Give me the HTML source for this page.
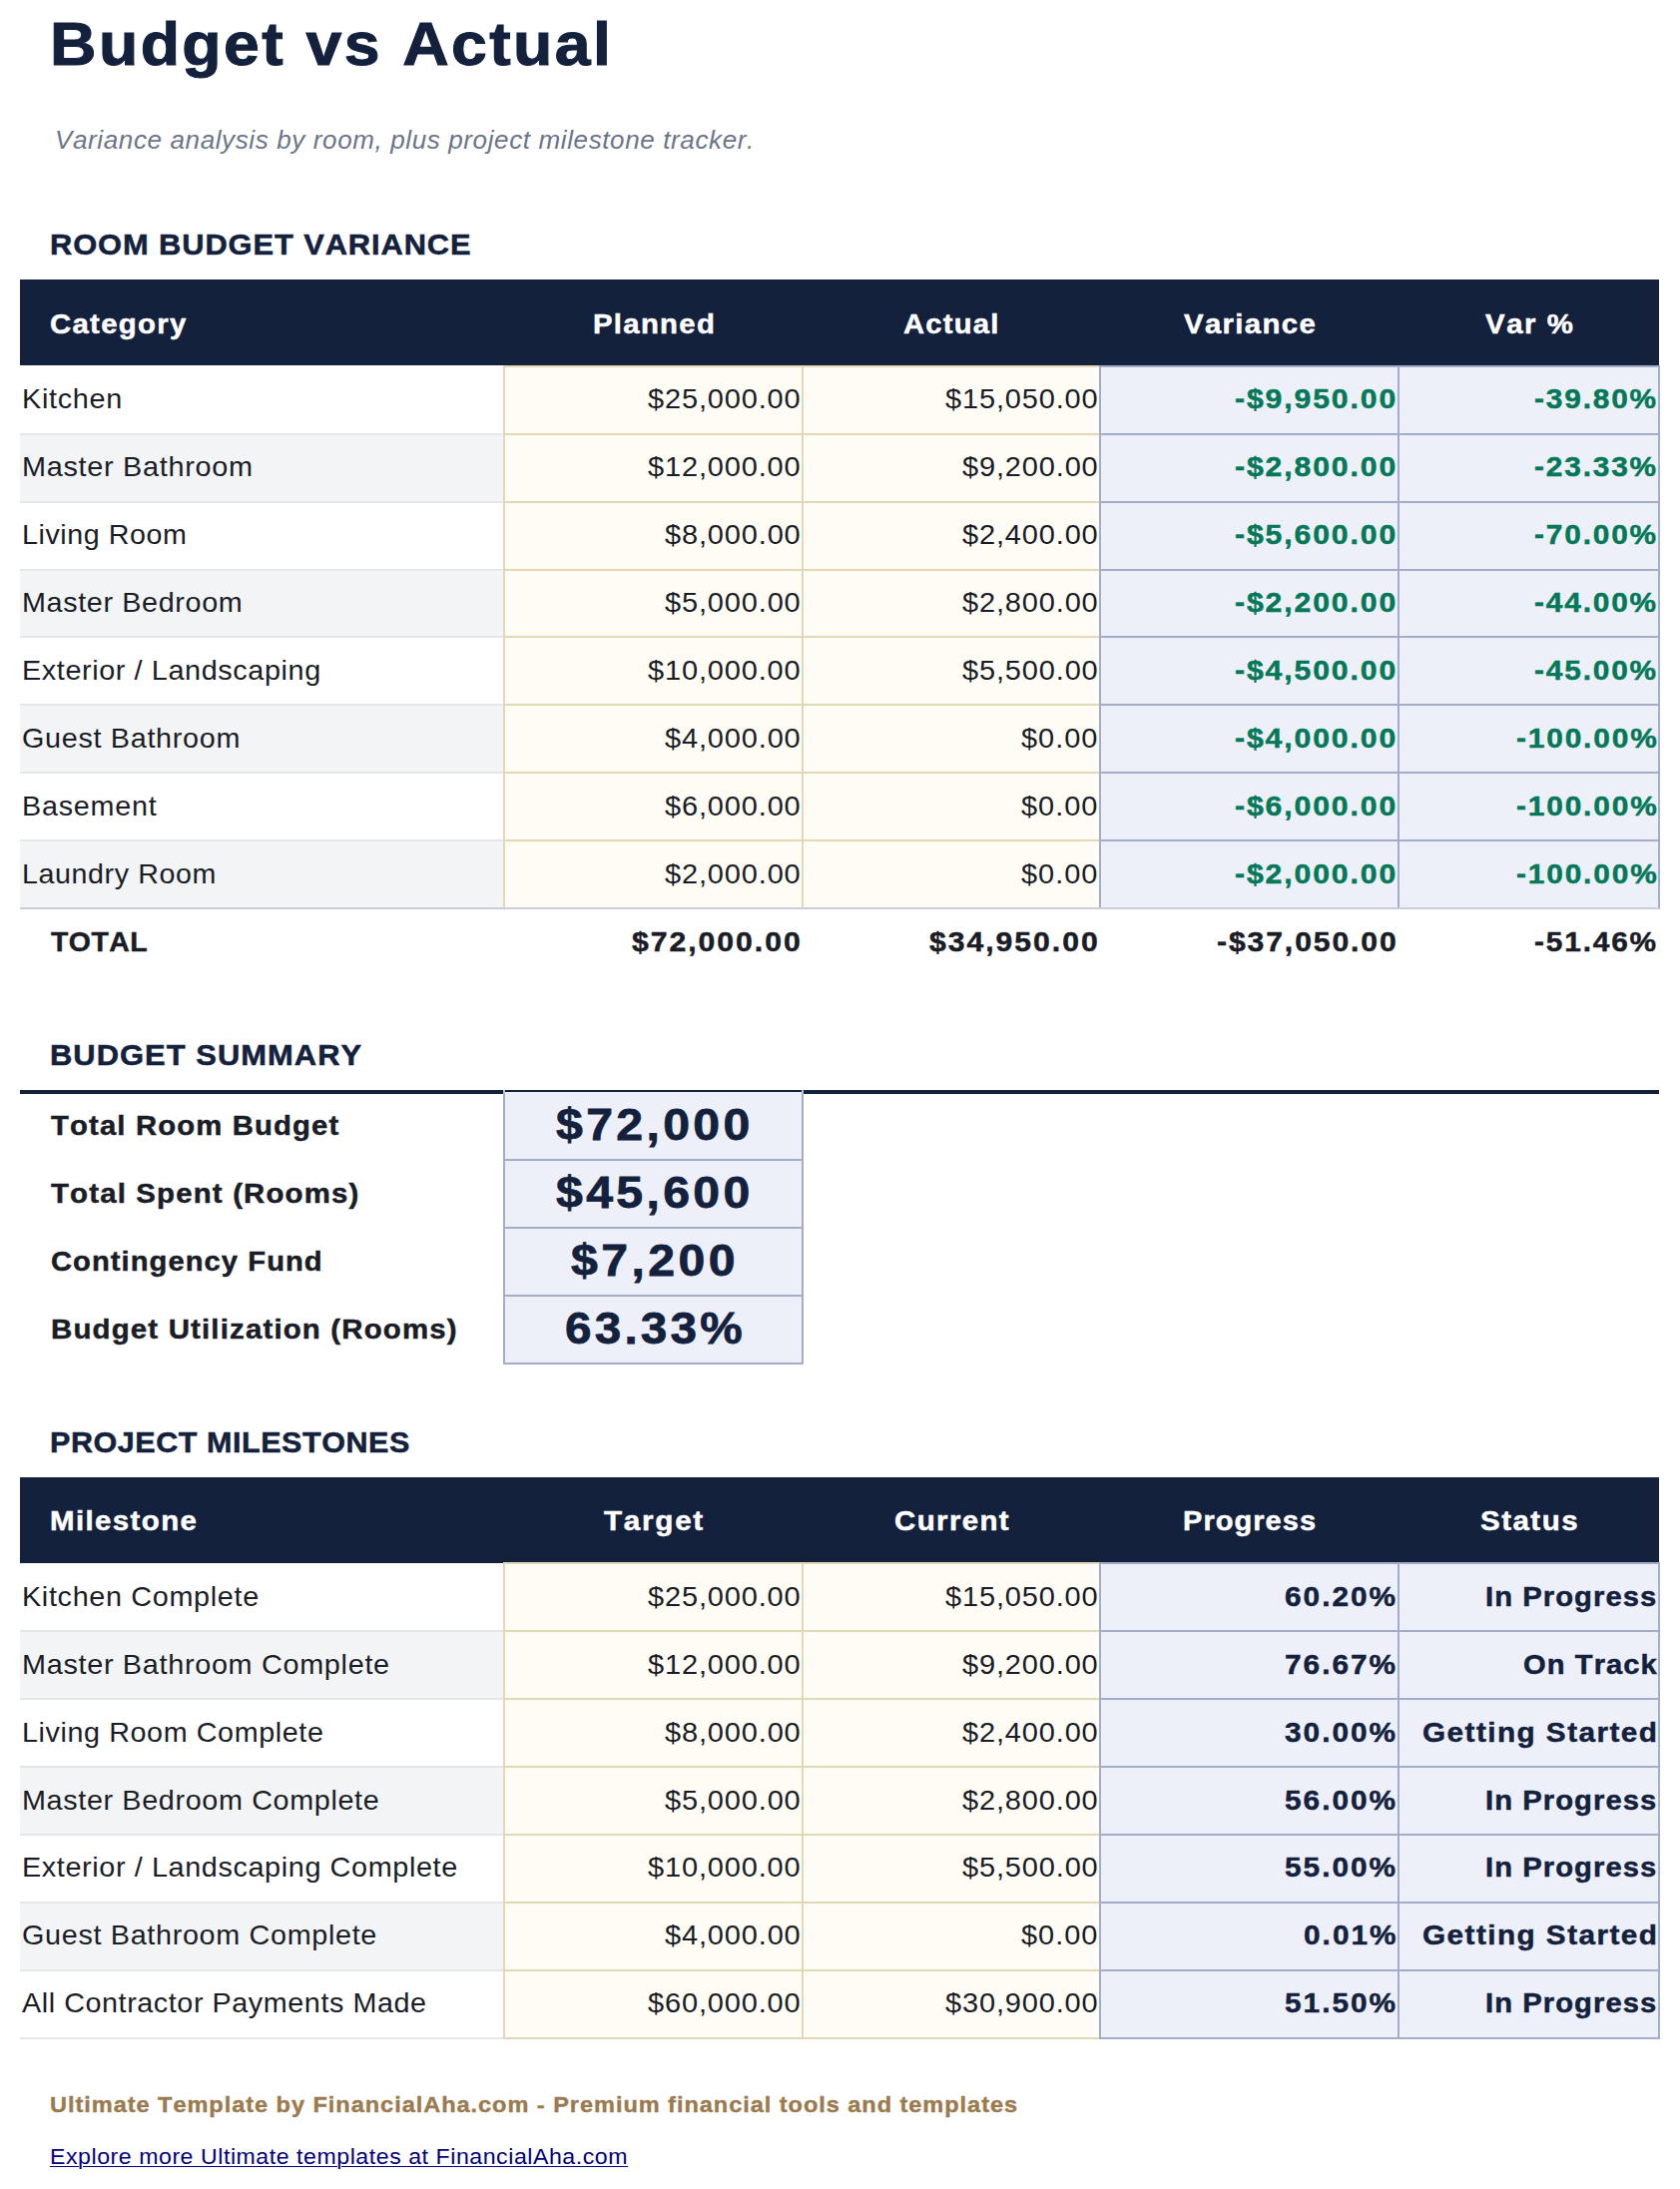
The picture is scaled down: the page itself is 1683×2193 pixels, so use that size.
<!DOCTYPE html><html><head><meta charset="utf-8"><style>html,body{margin:0;padding:0;background:#fff;}body{width:1683px;height:2193px;position:relative;overflow:hidden;}.r{position:absolute;}.t{position:absolute;white-space:pre;line-height:1;font-kerning:none;}</style></head><body><div class="r" style="left:20px;top:280px;width:1642px;height:86px;background:#14213d"></div><div class="r" style="left:20px;top:367px;width:485px;height:68px;background:#ffffff"></div><div class="r" style="left:505px;top:367px;width:597px;height:68px;background:#fefcf4"></div><div class="r" style="left:1102px;top:367px;width:560px;height:68px;background:#edf0f8"></div><div class="r" style="left:20px;top:435px;width:485px;height:68px;background:#f3f4f6"></div><div class="r" style="left:505px;top:435px;width:597px;height:68px;background:#fefcf4"></div><div class="r" style="left:1102px;top:435px;width:560px;height:68px;background:#edf0f8"></div><div class="r" style="left:20px;top:503px;width:485px;height:68px;background:#ffffff"></div><div class="r" style="left:505px;top:503px;width:597px;height:68px;background:#fefcf4"></div><div class="r" style="left:1102px;top:503px;width:560px;height:68px;background:#edf0f8"></div><div class="r" style="left:20px;top:571px;width:485px;height:67px;background:#f3f4f6"></div><div class="r" style="left:505px;top:571px;width:597px;height:67px;background:#fefcf4"></div><div class="r" style="left:1102px;top:571px;width:560px;height:67px;background:#edf0f8"></div><div class="r" style="left:20px;top:638px;width:485px;height:68px;background:#ffffff"></div><div class="r" style="left:505px;top:638px;width:597px;height:68px;background:#fefcf4"></div><div class="r" style="left:1102px;top:638px;width:560px;height:68px;background:#edf0f8"></div><div class="r" style="left:20px;top:706px;width:485px;height:68px;background:#f3f4f6"></div><div class="r" style="left:505px;top:706px;width:597px;height:68px;background:#fefcf4"></div><div class="r" style="left:1102px;top:706px;width:560px;height:68px;background:#edf0f8"></div><div class="r" style="left:20px;top:774px;width:485px;height:68px;background:#ffffff"></div><div class="r" style="left:505px;top:774px;width:597px;height:68px;background:#fefcf4"></div><div class="r" style="left:1102px;top:774px;width:560px;height:68px;background:#edf0f8"></div><div class="r" style="left:20px;top:842px;width:485px;height:68px;background:#f3f4f6"></div><div class="r" style="left:505px;top:842px;width:597px;height:68px;background:#fefcf4"></div><div class="r" style="left:1102px;top:842px;width:560px;height:68px;background:#edf0f8"></div><div class="r" style="left:505px;top:366px;width:597px;height:2px;background:#e2d8b8"></div><div class="r" style="left:1102px;top:366px;width:560px;height:2px;background:#a3adc8"></div><div class="r" style="left:20px;top:434px;width:485px;height:2px;background:#e5e7eb"></div><div class="r" style="left:505px;top:434px;width:597px;height:2px;background:#e2d8b8"></div><div class="r" style="left:1102px;top:434px;width:560px;height:2px;background:#a3adc8"></div><div class="r" style="left:20px;top:502px;width:485px;height:2px;background:#e5e7eb"></div><div class="r" style="left:505px;top:502px;width:597px;height:2px;background:#e2d8b8"></div><div class="r" style="left:1102px;top:502px;width:560px;height:2px;background:#a3adc8"></div><div class="r" style="left:20px;top:570px;width:485px;height:2px;background:#e5e7eb"></div><div class="r" style="left:505px;top:570px;width:597px;height:2px;background:#e2d8b8"></div><div class="r" style="left:1102px;top:570px;width:560px;height:2px;background:#a3adc8"></div><div class="r" style="left:20px;top:637px;width:485px;height:2px;background:#e5e7eb"></div><div class="r" style="left:505px;top:637px;width:597px;height:2px;background:#e2d8b8"></div><div class="r" style="left:1102px;top:637px;width:560px;height:2px;background:#a3adc8"></div><div class="r" style="left:20px;top:705px;width:485px;height:2px;background:#e5e7eb"></div><div class="r" style="left:505px;top:705px;width:597px;height:2px;background:#e2d8b8"></div><div class="r" style="left:1102px;top:705px;width:560px;height:2px;background:#a3adc8"></div><div class="r" style="left:20px;top:773px;width:485px;height:2px;background:#e5e7eb"></div><div class="r" style="left:505px;top:773px;width:597px;height:2px;background:#e2d8b8"></div><div class="r" style="left:1102px;top:773px;width:560px;height:2px;background:#a3adc8"></div><div class="r" style="left:20px;top:841px;width:485px;height:2px;background:#e5e7eb"></div><div class="r" style="left:505px;top:841px;width:597px;height:2px;background:#e2d8b8"></div><div class="r" style="left:1102px;top:841px;width:560px;height:2px;background:#a3adc8"></div><div class="r" style="left:20px;top:909px;width:485px;height:2px;background:#e5e7eb"></div><div class="r" style="left:505px;top:909px;width:597px;height:2px;background:#e2d8b8"></div><div class="r" style="left:1102px;top:909px;width:560px;height:2px;background:#a3adc8"></div><div class="r" style="left:504px;top:366px;width:2px;height:545px;background:#e2d8b8"></div><div class="r" style="left:803px;top:366px;width:2px;height:545px;background:#e2d8b8"></div><div class="r" style="left:1101px;top:366px;width:2px;height:545px;background:#a3adc8"></div><div class="r" style="left:1400px;top:366px;width:2px;height:545px;background:#a3adc8"></div><div class="r" style="left:1661px;top:366px;width:2px;height:545px;background:#a3adc8"></div><div class="r" style="left:20px;top:909px;width:1642px;height:2px;background:#c9cedb"></div><div class="r" style="left:20px;top:1092px;width:1642px;height:4px;background:#14213d"></div><div class="r" style="left:505px;top:1094px;width:299px;height:272px;background:#edf0f8"></div><div class="r" style="left:505px;top:1161px;width:299px;height:2px;background:#a3adc8"></div><div class="r" style="left:505px;top:1229px;width:299px;height:2px;background:#a3adc8"></div><div class="r" style="left:505px;top:1297px;width:299px;height:2px;background:#a3adc8"></div><div class="r" style="left:505px;top:1365px;width:299px;height:2px;background:#a3adc8"></div><div class="r" style="left:504px;top:1094px;width:2px;height:273px;background:#a3adc8"></div><div class="r" style="left:803px;top:1094px;width:2px;height:273px;background:#a3adc8"></div><div class="r" style="left:504px;top:1092px;width:2px;height:4px;background:#b9c0da"></div><div class="r" style="left:803px;top:1092px;width:2px;height:4px;background:#b9c0da"></div><div class="r" style="left:20px;top:1480px;width:1642px;height:86px;background:#14213d"></div><div class="r" style="left:20px;top:1566px;width:485px;height:68px;background:#ffffff"></div><div class="r" style="left:505px;top:1566px;width:597px;height:68px;background:#fefcf4"></div><div class="r" style="left:1102px;top:1566px;width:560px;height:68px;background:#edf0f8"></div><div class="r" style="left:20px;top:1634px;width:485px;height:68px;background:#f3f4f6"></div><div class="r" style="left:505px;top:1634px;width:597px;height:68px;background:#fefcf4"></div><div class="r" style="left:1102px;top:1634px;width:560px;height:68px;background:#edf0f8"></div><div class="r" style="left:20px;top:1702px;width:485px;height:68px;background:#ffffff"></div><div class="r" style="left:505px;top:1702px;width:597px;height:68px;background:#fefcf4"></div><div class="r" style="left:1102px;top:1702px;width:560px;height:68px;background:#edf0f8"></div><div class="r" style="left:20px;top:1770px;width:485px;height:68px;background:#f3f4f6"></div><div class="r" style="left:505px;top:1770px;width:597px;height:68px;background:#fefcf4"></div><div class="r" style="left:1102px;top:1770px;width:560px;height:68px;background:#edf0f8"></div><div class="r" style="left:20px;top:1838px;width:485px;height:68px;background:#ffffff"></div><div class="r" style="left:505px;top:1838px;width:597px;height:68px;background:#fefcf4"></div><div class="r" style="left:1102px;top:1838px;width:560px;height:68px;background:#edf0f8"></div><div class="r" style="left:20px;top:1906px;width:485px;height:68px;background:#f3f4f6"></div><div class="r" style="left:505px;top:1906px;width:597px;height:68px;background:#fefcf4"></div><div class="r" style="left:1102px;top:1906px;width:560px;height:68px;background:#edf0f8"></div><div class="r" style="left:20px;top:1974px;width:485px;height:68px;background:#ffffff"></div><div class="r" style="left:505px;top:1974px;width:597px;height:68px;background:#fefcf4"></div><div class="r" style="left:1102px;top:1974px;width:560px;height:68px;background:#edf0f8"></div><div class="r" style="left:505px;top:1565px;width:597px;height:2px;background:#e2d8b8"></div><div class="r" style="left:1102px;top:1565px;width:560px;height:2px;background:#a3adc8"></div><div class="r" style="left:20px;top:1633px;width:485px;height:2px;background:#e5e7eb"></div><div class="r" style="left:505px;top:1633px;width:597px;height:2px;background:#e2d8b8"></div><div class="r" style="left:1102px;top:1633px;width:560px;height:2px;background:#a3adc8"></div><div class="r" style="left:20px;top:1701px;width:485px;height:2px;background:#e5e7eb"></div><div class="r" style="left:505px;top:1701px;width:597px;height:2px;background:#e2d8b8"></div><div class="r" style="left:1102px;top:1701px;width:560px;height:2px;background:#a3adc8"></div><div class="r" style="left:20px;top:1769px;width:485px;height:2px;background:#e5e7eb"></div><div class="r" style="left:505px;top:1769px;width:597px;height:2px;background:#e2d8b8"></div><div class="r" style="left:1102px;top:1769px;width:560px;height:2px;background:#a3adc8"></div><div class="r" style="left:20px;top:1837px;width:485px;height:2px;background:#e5e7eb"></div><div class="r" style="left:505px;top:1837px;width:597px;height:2px;background:#e2d8b8"></div><div class="r" style="left:1102px;top:1837px;width:560px;height:2px;background:#a3adc8"></div><div class="r" style="left:20px;top:1905px;width:485px;height:2px;background:#e5e7eb"></div><div class="r" style="left:505px;top:1905px;width:597px;height:2px;background:#e2d8b8"></div><div class="r" style="left:1102px;top:1905px;width:560px;height:2px;background:#a3adc8"></div><div class="r" style="left:20px;top:1973px;width:485px;height:2px;background:#e5e7eb"></div><div class="r" style="left:505px;top:1973px;width:597px;height:2px;background:#e2d8b8"></div><div class="r" style="left:1102px;top:1973px;width:560px;height:2px;background:#a3adc8"></div><div class="r" style="left:20px;top:2041px;width:485px;height:2px;background:#e5e7eb"></div><div class="r" style="left:505px;top:2041px;width:597px;height:2px;background:#e2d8b8"></div><div class="r" style="left:1102px;top:2041px;width:560px;height:2px;background:#a3adc8"></div><div class="r" style="left:504px;top:1565px;width:2px;height:478px;background:#e2d8b8"></div><div class="r" style="left:803px;top:1565px;width:2px;height:478px;background:#e2d8b8"></div><div class="r" style="left:1101px;top:1565px;width:2px;height:478px;background:#a3adc8"></div><div class="r" style="left:1400px;top:1565px;width:2px;height:478px;background:#a3adc8"></div><div class="r" style="left:1661px;top:1565px;width:2px;height:478px;background:#a3adc8"></div><div class="t" style="left:49.66px;top:13.05px;font-family:'Liberation Sans', sans-serif;font-size:61.600px;font-weight:700;font-style:normal;letter-spacing:2.302px;color:#14213d;-webkit-text-stroke:1.04px #14213d;transform:scaleX(1.0452);transform-origin:0 0;">Budget vs Actual<span style="display:inline-block;width:0;height:0;vertical-align:baseline"></span></div><div class="t" style="left:54.80px;top:127.90px;font-family:'Liberation Sans', sans-serif;font-size:25.200px;font-weight:400;font-style:italic;letter-spacing:0.583px;color:#6b7589;transform:scaleX(1.0341);transform-origin:0 0;">Variance analysis by room, plus project milestone tracker.<span style="display:inline-block;width:0;height:0;vertical-align:baseline"></span></div><div class="t" style="left:50.43px;top:229.80px;font-family:'Liberation Sans', sans-serif;font-size:30.009px;font-weight:700;font-style:normal;letter-spacing:0.880px;color:#14213d;-webkit-text-stroke:0.51px #14213d;transform:scaleX(1.0281);transform-origin:0 0;">ROOM BUDGET VARIANCE<span style="display:inline-block;width:0;height:0;vertical-align:baseline"></span></div><div class="t" style="left:50.45px;top:311.00px;font-family:'Liberation Sans', sans-serif;font-size:28.000px;font-weight:700;font-style:normal;letter-spacing:1.254px;color:#ffffff;-webkit-text-stroke:0.47px #ffffff;transform:scaleX(1.0476);transform-origin:0 0;">Category<span style="display:inline-block;width:0;height:0;vertical-align:baseline"></span></div><div class="t" style="left:593.59px;top:311.00px;font-family:'Liberation Sans', sans-serif;font-size:28.000px;font-weight:700;font-style:normal;letter-spacing:1.262px;color:#ffffff;-webkit-text-stroke:0.47px #ffffff;transform:scaleX(1.0458);transform-origin:0 0;">Planned<span style="display:inline-block;width:0;height:0;vertical-align:baseline"></span></div><div class="t" style="left:905.34px;top:311.00px;font-family:'Liberation Sans', sans-serif;font-size:28.000px;font-weight:700;font-style:normal;letter-spacing:1.144px;color:#ffffff;-webkit-text-stroke:0.47px #ffffff;transform:scaleX(1.0441);transform-origin:0 0;">Actual<span style="display:inline-block;width:0;height:0;vertical-align:baseline"></span></div><div class="t" style="left:1185.60px;top:311.00px;font-family:'Liberation Sans', sans-serif;font-size:28.000px;font-weight:700;font-style:normal;letter-spacing:1.259px;color:#ffffff;-webkit-text-stroke:0.47px #ffffff;transform:scaleX(1.0497);transform-origin:0 0;">Variance<span style="display:inline-block;width:0;height:0;vertical-align:baseline"></span></div><div class="t" style="left:1487.61px;top:311.00px;font-family:'Liberation Sans', sans-serif;font-size:28.000px;font-weight:700;font-style:normal;letter-spacing:1.459px;color:#ffffff;-webkit-text-stroke:0.47px #ffffff;transform:scaleX(1.0494);transform-origin:0 0;">Var %<span style="display:inline-block;width:0;height:0;vertical-align:baseline"></span></div><div class="t" style="left:22.38px;top:385.90px;font-family:'Liberation Sans', sans-serif;font-size:28.000px;font-weight:400;font-style:normal;letter-spacing:0.673px;color:#1a1d26;transform:scaleX(1.0286);transform-origin:0 0;">Kitchen<span style="display:inline-block;width:0;height:0;vertical-align:baseline"></span></div><div class="t" style="left:648.82px;top:385.90px;font-family:'Liberation Sans', sans-serif;font-size:28.000px;font-weight:400;font-style:normal;letter-spacing:0.822px;color:#1a1d26;transform:scaleX(1.0349);transform-origin:0 0;">$25,000.00<span style="display:inline-block;width:0;height:0;vertical-align:baseline"></span></div><div class="t" style="left:946.82px;top:385.90px;font-family:'Liberation Sans', sans-serif;font-size:28.000px;font-weight:400;font-style:normal;letter-spacing:0.822px;color:#1a1d26;transform:scaleX(1.0349);transform-origin:0 0;">$15,050.00<span style="display:inline-block;width:0;height:0;vertical-align:baseline"></span></div><div class="t" style="left:1237.29px;top:385.90px;font-family:'Liberation Sans', sans-serif;font-size:28.000px;font-weight:700;font-style:normal;letter-spacing:1.753px;color:#047857;-webkit-text-stroke:0.47px #047857;transform:scaleX(1.0771);transform-origin:0 0;">-$9,950.00<span style="display:inline-block;width:0;height:0;vertical-align:baseline"></span></div><div class="t" style="left:1537.36px;top:385.90px;font-family:'Liberation Sans', sans-serif;font-size:28.000px;font-weight:700;font-style:normal;letter-spacing:1.728px;color:#047857;-webkit-text-stroke:0.47px #047857;transform:scaleX(1.0652);transform-origin:0 0;">-39.80%<span style="display:inline-block;width:0;height:0;vertical-align:baseline"></span></div><div class="t" style="left:22.38px;top:453.90px;font-family:'Liberation Sans', sans-serif;font-size:28.000px;font-weight:400;font-style:normal;letter-spacing:0.691px;color:#1a1d26;transform:scaleX(1.0298);transform-origin:0 0;">Master Bathroom<span style="display:inline-block;width:0;height:0;vertical-align:baseline"></span></div><div class="t" style="left:648.82px;top:453.90px;font-family:'Liberation Sans', sans-serif;font-size:28.000px;font-weight:400;font-style:normal;letter-spacing:0.822px;color:#1a1d26;transform:scaleX(1.0349);transform-origin:0 0;">$12,000.00<span style="display:inline-block;width:0;height:0;vertical-align:baseline"></span></div><div class="t" style="left:963.78px;top:453.90px;font-family:'Liberation Sans', sans-serif;font-size:28.000px;font-weight:400;font-style:normal;letter-spacing:0.822px;color:#1a1d26;transform:scaleX(1.0349);transform-origin:0 0;">$9,200.00<span style="display:inline-block;width:0;height:0;vertical-align:baseline"></span></div><div class="t" style="left:1237.29px;top:453.90px;font-family:'Liberation Sans', sans-serif;font-size:28.000px;font-weight:700;font-style:normal;letter-spacing:1.753px;color:#047857;-webkit-text-stroke:0.47px #047857;transform:scaleX(1.0771);transform-origin:0 0;">-$2,800.00<span style="display:inline-block;width:0;height:0;vertical-align:baseline"></span></div><div class="t" style="left:1537.36px;top:453.90px;font-family:'Liberation Sans', sans-serif;font-size:28.000px;font-weight:700;font-style:normal;letter-spacing:1.728px;color:#047857;-webkit-text-stroke:0.47px #047857;transform:scaleX(1.0652);transform-origin:0 0;">-23.33%<span style="display:inline-block;width:0;height:0;vertical-align:baseline"></span></div><div class="t" style="left:22.38px;top:521.90px;font-family:'Liberation Sans', sans-serif;font-size:28.000px;font-weight:400;font-style:normal;letter-spacing:0.550px;color:#1a1d26;transform:scaleX(1.0234);transform-origin:0 0;">Living Room<span style="display:inline-block;width:0;height:0;vertical-align:baseline"></span></div><div class="t" style="left:665.78px;top:521.90px;font-family:'Liberation Sans', sans-serif;font-size:28.000px;font-weight:400;font-style:normal;letter-spacing:0.822px;color:#1a1d26;transform:scaleX(1.0349);transform-origin:0 0;">$8,000.00<span style="display:inline-block;width:0;height:0;vertical-align:baseline"></span></div><div class="t" style="left:963.78px;top:521.90px;font-family:'Liberation Sans', sans-serif;font-size:28.000px;font-weight:400;font-style:normal;letter-spacing:0.822px;color:#1a1d26;transform:scaleX(1.0349);transform-origin:0 0;">$2,400.00<span style="display:inline-block;width:0;height:0;vertical-align:baseline"></span></div><div class="t" style="left:1237.29px;top:521.90px;font-family:'Liberation Sans', sans-serif;font-size:28.000px;font-weight:700;font-style:normal;letter-spacing:1.753px;color:#047857;-webkit-text-stroke:0.47px #047857;transform:scaleX(1.0771);transform-origin:0 0;">-$5,600.00<span style="display:inline-block;width:0;height:0;vertical-align:baseline"></span></div><div class="t" style="left:1537.36px;top:521.90px;font-family:'Liberation Sans', sans-serif;font-size:28.000px;font-weight:700;font-style:normal;letter-spacing:1.728px;color:#047857;-webkit-text-stroke:0.47px #047857;transform:scaleX(1.0652);transform-origin:0 0;">-70.00%<span style="display:inline-block;width:0;height:0;vertical-align:baseline"></span></div><div class="t" style="left:22.38px;top:589.90px;font-family:'Liberation Sans', sans-serif;font-size:28.000px;font-weight:400;font-style:normal;letter-spacing:0.628px;color:#1a1d26;transform:scaleX(1.0261);transform-origin:0 0;">Master Bedroom<span style="display:inline-block;width:0;height:0;vertical-align:baseline"></span></div><div class="t" style="left:665.78px;top:589.90px;font-family:'Liberation Sans', sans-serif;font-size:28.000px;font-weight:400;font-style:normal;letter-spacing:0.822px;color:#1a1d26;transform:scaleX(1.0349);transform-origin:0 0;">$5,000.00<span style="display:inline-block;width:0;height:0;vertical-align:baseline"></span></div><div class="t" style="left:963.78px;top:589.90px;font-family:'Liberation Sans', sans-serif;font-size:28.000px;font-weight:400;font-style:normal;letter-spacing:0.822px;color:#1a1d26;transform:scaleX(1.0349);transform-origin:0 0;">$2,800.00<span style="display:inline-block;width:0;height:0;vertical-align:baseline"></span></div><div class="t" style="left:1237.29px;top:589.90px;font-family:'Liberation Sans', sans-serif;font-size:28.000px;font-weight:700;font-style:normal;letter-spacing:1.753px;color:#047857;-webkit-text-stroke:0.47px #047857;transform:scaleX(1.0771);transform-origin:0 0;">-$2,200.00<span style="display:inline-block;width:0;height:0;vertical-align:baseline"></span></div><div class="t" style="left:1537.36px;top:589.90px;font-family:'Liberation Sans', sans-serif;font-size:28.000px;font-weight:700;font-style:normal;letter-spacing:1.728px;color:#047857;-webkit-text-stroke:0.47px #047857;transform:scaleX(1.0652);transform-origin:0 0;">-44.00%<span style="display:inline-block;width:0;height:0;vertical-align:baseline"></span></div><div class="t" style="left:22.38px;top:657.90px;font-family:'Liberation Sans', sans-serif;font-size:28.000px;font-weight:400;font-style:normal;letter-spacing:0.579px;color:#1a1d26;transform:scaleX(1.0289);transform-origin:0 0;">Exterior / Landscaping<span style="display:inline-block;width:0;height:0;vertical-align:baseline"></span></div><div class="t" style="left:648.82px;top:657.90px;font-family:'Liberation Sans', sans-serif;font-size:28.000px;font-weight:400;font-style:normal;letter-spacing:0.822px;color:#1a1d26;transform:scaleX(1.0349);transform-origin:0 0;">$10,000.00<span style="display:inline-block;width:0;height:0;vertical-align:baseline"></span></div><div class="t" style="left:963.78px;top:657.90px;font-family:'Liberation Sans', sans-serif;font-size:28.000px;font-weight:400;font-style:normal;letter-spacing:0.822px;color:#1a1d26;transform:scaleX(1.0349);transform-origin:0 0;">$5,500.00<span style="display:inline-block;width:0;height:0;vertical-align:baseline"></span></div><div class="t" style="left:1237.29px;top:657.90px;font-family:'Liberation Sans', sans-serif;font-size:28.000px;font-weight:700;font-style:normal;letter-spacing:1.753px;color:#047857;-webkit-text-stroke:0.47px #047857;transform:scaleX(1.0771);transform-origin:0 0;">-$4,500.00<span style="display:inline-block;width:0;height:0;vertical-align:baseline"></span></div><div class="t" style="left:1537.36px;top:657.90px;font-family:'Liberation Sans', sans-serif;font-size:28.000px;font-weight:700;font-style:normal;letter-spacing:1.728px;color:#047857;-webkit-text-stroke:0.47px #047857;transform:scaleX(1.0652);transform-origin:0 0;">-45.00%<span style="display:inline-block;width:0;height:0;vertical-align:baseline"></span></div><div class="t" style="left:22.38px;top:725.90px;font-family:'Liberation Sans', sans-serif;font-size:28.000px;font-weight:400;font-style:normal;letter-spacing:0.659px;color:#1a1d26;transform:scaleX(1.0278);transform-origin:0 0;">Guest Bathroom<span style="display:inline-block;width:0;height:0;vertical-align:baseline"></span></div><div class="t" style="left:665.78px;top:725.90px;font-family:'Liberation Sans', sans-serif;font-size:28.000px;font-weight:400;font-style:normal;letter-spacing:0.822px;color:#1a1d26;transform:scaleX(1.0349);transform-origin:0 0;">$4,000.00<span style="display:inline-block;width:0;height:0;vertical-align:baseline"></span></div><div class="t" style="left:1023.16px;top:725.90px;font-family:'Liberation Sans', sans-serif;font-size:28.000px;font-weight:400;font-style:normal;letter-spacing:0.925px;color:#1a1d26;transform:scaleX(1.0349);transform-origin:0 0;">$0.00<span style="display:inline-block;width:0;height:0;vertical-align:baseline"></span></div><div class="t" style="left:1237.29px;top:725.90px;font-family:'Liberation Sans', sans-serif;font-size:28.000px;font-weight:700;font-style:normal;letter-spacing:1.753px;color:#047857;-webkit-text-stroke:0.47px #047857;transform:scaleX(1.0771);transform-origin:0 0;">-$4,000.00<span style="display:inline-block;width:0;height:0;vertical-align:baseline"></span></div><div class="t" style="left:1518.81px;top:725.90px;font-family:'Liberation Sans', sans-serif;font-size:28.000px;font-weight:700;font-style:normal;letter-spacing:1.728px;color:#047857;-webkit-text-stroke:0.47px #047857;transform:scaleX(1.0662);transform-origin:0 0;">-100.00%<span style="display:inline-block;width:0;height:0;vertical-align:baseline"></span></div><div class="t" style="left:22.38px;top:793.90px;font-family:'Liberation Sans', sans-serif;font-size:28.000px;font-weight:400;font-style:normal;letter-spacing:0.728px;color:#1a1d26;transform:scaleX(1.0268);transform-origin:0 0;">Basement<span style="display:inline-block;width:0;height:0;vertical-align:baseline"></span></div><div class="t" style="left:665.78px;top:793.90px;font-family:'Liberation Sans', sans-serif;font-size:28.000px;font-weight:400;font-style:normal;letter-spacing:0.822px;color:#1a1d26;transform:scaleX(1.0349);transform-origin:0 0;">$6,000.00<span style="display:inline-block;width:0;height:0;vertical-align:baseline"></span></div><div class="t" style="left:1023.16px;top:793.90px;font-family:'Liberation Sans', sans-serif;font-size:28.000px;font-weight:400;font-style:normal;letter-spacing:0.925px;color:#1a1d26;transform:scaleX(1.0349);transform-origin:0 0;">$0.00<span style="display:inline-block;width:0;height:0;vertical-align:baseline"></span></div><div class="t" style="left:1237.29px;top:793.90px;font-family:'Liberation Sans', sans-serif;font-size:28.000px;font-weight:700;font-style:normal;letter-spacing:1.753px;color:#047857;-webkit-text-stroke:0.47px #047857;transform:scaleX(1.0771);transform-origin:0 0;">-$6,000.00<span style="display:inline-block;width:0;height:0;vertical-align:baseline"></span></div><div class="t" style="left:1518.81px;top:793.90px;font-family:'Liberation Sans', sans-serif;font-size:28.000px;font-weight:700;font-style:normal;letter-spacing:1.728px;color:#047857;-webkit-text-stroke:0.47px #047857;transform:scaleX(1.0662);transform-origin:0 0;">-100.00%<span style="display:inline-block;width:0;height:0;vertical-align:baseline"></span></div><div class="t" style="left:22.38px;top:861.90px;font-family:'Liberation Sans', sans-serif;font-size:28.000px;font-weight:400;font-style:normal;letter-spacing:0.573px;color:#1a1d26;transform:scaleX(1.0228);transform-origin:0 0;">Laundry Room<span style="display:inline-block;width:0;height:0;vertical-align:baseline"></span></div><div class="t" style="left:665.78px;top:861.90px;font-family:'Liberation Sans', sans-serif;font-size:28.000px;font-weight:400;font-style:normal;letter-spacing:0.822px;color:#1a1d26;transform:scaleX(1.0349);transform-origin:0 0;">$2,000.00<span style="display:inline-block;width:0;height:0;vertical-align:baseline"></span></div><div class="t" style="left:1023.16px;top:861.90px;font-family:'Liberation Sans', sans-serif;font-size:28.000px;font-weight:400;font-style:normal;letter-spacing:0.925px;color:#1a1d26;transform:scaleX(1.0349);transform-origin:0 0;">$0.00<span style="display:inline-block;width:0;height:0;vertical-align:baseline"></span></div><div class="t" style="left:1237.29px;top:861.90px;font-family:'Liberation Sans', sans-serif;font-size:28.000px;font-weight:700;font-style:normal;letter-spacing:1.753px;color:#047857;-webkit-text-stroke:0.47px #047857;transform:scaleX(1.0771);transform-origin:0 0;">-$2,000.00<span style="display:inline-block;width:0;height:0;vertical-align:baseline"></span></div><div class="t" style="left:1518.81px;top:861.90px;font-family:'Liberation Sans', sans-serif;font-size:28.000px;font-weight:700;font-style:normal;letter-spacing:1.728px;color:#047857;-webkit-text-stroke:0.47px #047857;transform:scaleX(1.0662);transform-origin:0 0;">-100.00%<span style="display:inline-block;width:0;height:0;vertical-align:baseline"></span></div><div class="t" style="left:50.55px;top:929.70px;font-family:'Liberation Sans', sans-serif;font-size:28.000px;font-weight:700;font-style:normal;letter-spacing:0.502px;color:#1a1d26;-webkit-text-stroke:0.47px #1a1d26;transform:scaleX(1.0143);transform-origin:0 0;">TOTAL<span style="display:inline-block;width:0;height:0;vertical-align:baseline"></span></div><div class="t" style="left:632.80px;top:929.70px;font-family:'Liberation Sans', sans-serif;font-size:28.000px;font-weight:700;font-style:normal;letter-spacing:1.833px;color:#1a1d26;-webkit-text-stroke:0.47px #1a1d26;transform:scaleX(1.0770);transform-origin:0 0;">$72,000.00<span style="display:inline-block;width:0;height:0;vertical-align:baseline"></span></div><div class="t" style="left:930.80px;top:929.70px;font-family:'Liberation Sans', sans-serif;font-size:28.000px;font-weight:700;font-style:normal;letter-spacing:1.833px;color:#1a1d26;-webkit-text-stroke:0.47px #1a1d26;transform:scaleX(1.0770);transform-origin:0 0;">$34,950.00<span style="display:inline-block;width:0;height:0;vertical-align:baseline"></span></div><div class="t" style="left:1218.73px;top:929.70px;font-family:'Liberation Sans', sans-serif;font-size:28.000px;font-weight:700;font-style:normal;letter-spacing:1.751px;color:#1a1d26;-webkit-text-stroke:0.47px #1a1d26;transform:scaleX(1.0766);transform-origin:0 0;">-$37,050.00<span style="display:inline-block;width:0;height:0;vertical-align:baseline"></span></div><div class="t" style="left:1537.36px;top:929.70px;font-family:'Liberation Sans', sans-serif;font-size:28.000px;font-weight:700;font-style:normal;letter-spacing:1.728px;color:#1a1d26;-webkit-text-stroke:0.47px #1a1d26;transform:scaleX(1.0652);transform-origin:0 0;">-51.46%<span style="display:inline-block;width:0;height:0;vertical-align:baseline"></span></div><div class="t" style="left:50.43px;top:1041.80px;font-family:'Liberation Sans', sans-serif;font-size:30.009px;font-weight:700;font-style:normal;letter-spacing:1.007px;color:#14213d;-webkit-text-stroke:0.51px #14213d;transform:scaleX(1.0299);transform-origin:0 0;">BUDGET SUMMARY<span style="display:inline-block;width:0;height:0;vertical-align:baseline"></span></div><div class="t" style="left:50.50px;top:1113.90px;font-family:'Liberation Sans', sans-serif;font-size:28.000px;font-weight:700;font-style:normal;letter-spacing:1.102px;color:#1a1d26;-webkit-text-stroke:0.47px #1a1d26;transform:scaleX(1.0450);transform-origin:0 0;">Total Room Budget<span style="display:inline-block;width:0;height:0;vertical-align:baseline"></span></div><div class="t" style="left:557.33px;top:1104.30px;font-family:'Liberation Sans', sans-serif;font-size:44.800px;font-weight:700;font-style:normal;letter-spacing:3.121px;color:#14213d;-webkit-text-stroke:0.76px #14213d;transform:scaleX(1.0757);transform-origin:0 0;">$72,000<span style="display:inline-block;width:0;height:0;vertical-align:baseline"></span></div><div class="t" style="left:50.50px;top:1181.90px;font-family:'Liberation Sans', sans-serif;font-size:28.000px;font-weight:700;font-style:normal;letter-spacing:1.123px;color:#1a1d26;-webkit-text-stroke:0.47px #1a1d26;transform:scaleX(1.0486);transform-origin:0 0;">Total Spent (Rooms)<span style="display:inline-block;width:0;height:0;vertical-align:baseline"></span></div><div class="t" style="left:557.33px;top:1172.30px;font-family:'Liberation Sans', sans-serif;font-size:44.800px;font-weight:700;font-style:normal;letter-spacing:3.121px;color:#14213d;-webkit-text-stroke:0.76px #14213d;transform:scaleX(1.0757);transform-origin:0 0;">$45,600<span style="display:inline-block;width:0;height:0;vertical-align:baseline"></span></div><div class="t" style="left:50.50px;top:1249.90px;font-family:'Liberation Sans', sans-serif;font-size:28.000px;font-weight:700;font-style:normal;letter-spacing:1.015px;color:#1a1d26;-webkit-text-stroke:0.47px #1a1d26;transform:scaleX(1.0409);transform-origin:0 0;">Contingency Fund<span style="display:inline-block;width:0;height:0;vertical-align:baseline"></span></div><div class="t" style="left:572.18px;top:1240.30px;font-family:'Liberation Sans', sans-serif;font-size:44.800px;font-weight:700;font-style:normal;letter-spacing:3.192px;color:#14213d;-webkit-text-stroke:0.76px #14213d;transform:scaleX(1.0762);transform-origin:0 0;">$7,200<span style="display:inline-block;width:0;height:0;vertical-align:baseline"></span></div><div class="t" style="left:50.50px;top:1317.90px;font-family:'Liberation Sans', sans-serif;font-size:28.000px;font-weight:700;font-style:normal;letter-spacing:1.108px;color:#1a1d26;-webkit-text-stroke:0.47px #1a1d26;transform:scaleX(1.0507);transform-origin:0 0;">Budget Utilization (Rooms)<span style="display:inline-block;width:0;height:0;vertical-align:baseline"></span></div><div class="t" style="left:565.65px;top:1308.30px;font-family:'Liberation Sans', sans-serif;font-size:44.800px;font-weight:700;font-style:normal;letter-spacing:2.994px;color:#14213d;-webkit-text-stroke:0.76px #14213d;transform:scaleX(1.0647);transform-origin:0 0;">63.33%<span style="display:inline-block;width:0;height:0;vertical-align:baseline"></span></div><div class="t" style="left:50.43px;top:1429.90px;font-family:'Liberation Sans', sans-serif;font-size:30.009px;font-weight:700;font-style:normal;letter-spacing:0.532px;color:#14213d;-webkit-text-stroke:0.51px #14213d;transform:scaleX(1.0174);transform-origin:0 0;">PROJECT MILESTONES<span style="display:inline-block;width:0;height:0;vertical-align:baseline"></span></div><div class="t" style="left:50.45px;top:1510.00px;font-family:'Liberation Sans', sans-serif;font-size:28.000px;font-weight:700;font-style:normal;letter-spacing:1.299px;color:#ffffff;-webkit-text-stroke:0.47px #ffffff;transform:scaleX(1.0530);transform-origin:0 0;">Milestone<span style="display:inline-block;width:0;height:0;vertical-align:baseline"></span></div><div class="t" style="left:604.87px;top:1510.00px;font-family:'Liberation Sans', sans-serif;font-size:28.000px;font-weight:700;font-style:normal;letter-spacing:1.593px;color:#ffffff;-webkit-text-stroke:0.47px #ffffff;transform:scaleX(1.0611);transform-origin:0 0;">Target<span style="display:inline-block;width:0;height:0;vertical-align:baseline"></span></div><div class="t" style="left:895.66px;top:1510.00px;font-family:'Liberation Sans', sans-serif;font-size:28.000px;font-weight:700;font-style:normal;letter-spacing:1.321px;color:#ffffff;-webkit-text-stroke:0.47px #ffffff;transform:scaleX(1.0516);transform-origin:0 0;">Current<span style="display:inline-block;width:0;height:0;vertical-align:baseline"></span></div><div class="t" style="left:1184.96px;top:1510.00px;font-family:'Liberation Sans', sans-serif;font-size:28.000px;font-weight:700;font-style:normal;letter-spacing:0.984px;color:#ffffff;-webkit-text-stroke:0.47px #ffffff;transform:scaleX(1.0375);transform-origin:0 0;">Progress<span style="display:inline-block;width:0;height:0;vertical-align:baseline"></span></div><div class="t" style="left:1482.72px;top:1510.00px;font-family:'Liberation Sans', sans-serif;font-size:28.000px;font-weight:700;font-style:normal;letter-spacing:1.400px;color:#ffffff;-webkit-text-stroke:0.47px #ffffff;transform:scaleX(1.0538);transform-origin:0 0;">Status<span style="display:inline-block;width:0;height:0;vertical-align:baseline"></span></div><div class="t" style="left:22.38px;top:1585.90px;font-family:'Liberation Sans', sans-serif;font-size:28.000px;font-weight:400;font-style:normal;letter-spacing:0.639px;color:#1a1d26;transform:scaleX(1.0287);transform-origin:0 0;">Kitchen Complete<span style="display:inline-block;width:0;height:0;vertical-align:baseline"></span></div><div class="t" style="left:648.82px;top:1585.90px;font-family:'Liberation Sans', sans-serif;font-size:28.000px;font-weight:400;font-style:normal;letter-spacing:0.822px;color:#1a1d26;transform:scaleX(1.0349);transform-origin:0 0;">$25,000.00<span style="display:inline-block;width:0;height:0;vertical-align:baseline"></span></div><div class="t" style="left:946.82px;top:1585.90px;font-family:'Liberation Sans', sans-serif;font-size:28.000px;font-weight:400;font-style:normal;letter-spacing:0.822px;color:#1a1d26;transform:scaleX(1.0349);transform-origin:0 0;">$15,050.00<span style="display:inline-block;width:0;height:0;vertical-align:baseline"></span></div><div class="t" style="left:1287.43px;top:1585.90px;font-family:'Liberation Sans', sans-serif;font-size:28.000px;font-weight:700;font-style:normal;letter-spacing:1.872px;color:#14213d;-webkit-text-stroke:0.47px #14213d;transform:scaleX(1.0647);transform-origin:0 0;">60.20%<span style="display:inline-block;width:0;height:0;vertical-align:baseline"></span></div><div class="t" style="left:1488.22px;top:1585.90px;font-family:'Liberation Sans', sans-serif;font-size:28.000px;font-weight:700;font-style:normal;letter-spacing:1.011px;color:#14213d;-webkit-text-stroke:0.47px #14213d;transform:scaleX(1.0433);transform-origin:0 0;">In Progress<span style="display:inline-block;width:0;height:0;vertical-align:baseline"></span></div><div class="t" style="left:22.38px;top:1653.90px;font-family:'Liberation Sans', sans-serif;font-size:28.000px;font-weight:400;font-style:normal;letter-spacing:0.662px;color:#1a1d26;transform:scaleX(1.0294);transform-origin:0 0;">Master Bathroom Complete<span style="display:inline-block;width:0;height:0;vertical-align:baseline"></span></div><div class="t" style="left:648.82px;top:1653.90px;font-family:'Liberation Sans', sans-serif;font-size:28.000px;font-weight:400;font-style:normal;letter-spacing:0.822px;color:#1a1d26;transform:scaleX(1.0349);transform-origin:0 0;">$12,000.00<span style="display:inline-block;width:0;height:0;vertical-align:baseline"></span></div><div class="t" style="left:963.78px;top:1653.90px;font-family:'Liberation Sans', sans-serif;font-size:28.000px;font-weight:400;font-style:normal;letter-spacing:0.822px;color:#1a1d26;transform:scaleX(1.0349);transform-origin:0 0;">$9,200.00<span style="display:inline-block;width:0;height:0;vertical-align:baseline"></span></div><div class="t" style="left:1287.43px;top:1653.90px;font-family:'Liberation Sans', sans-serif;font-size:28.000px;font-weight:700;font-style:normal;letter-spacing:1.872px;color:#14213d;-webkit-text-stroke:0.47px #14213d;transform:scaleX(1.0647);transform-origin:0 0;">76.67%<span style="display:inline-block;width:0;height:0;vertical-align:baseline"></span></div><div class="t" style="left:1525.68px;top:1653.90px;font-family:'Liberation Sans', sans-serif;font-size:28.000px;font-weight:700;font-style:normal;letter-spacing:1.045px;color:#14213d;-webkit-text-stroke:0.47px #14213d;transform:scaleX(1.0398);transform-origin:0 0;">On Track<span style="display:inline-block;width:0;height:0;vertical-align:baseline"></span></div><div class="t" style="left:22.38px;top:1721.90px;font-family:'Liberation Sans', sans-serif;font-size:28.000px;font-weight:400;font-style:normal;letter-spacing:0.581px;color:#1a1d26;transform:scaleX(1.0258);transform-origin:0 0;">Living Room Complete<span style="display:inline-block;width:0;height:0;vertical-align:baseline"></span></div><div class="t" style="left:665.78px;top:1721.90px;font-family:'Liberation Sans', sans-serif;font-size:28.000px;font-weight:400;font-style:normal;letter-spacing:0.822px;color:#1a1d26;transform:scaleX(1.0349);transform-origin:0 0;">$8,000.00<span style="display:inline-block;width:0;height:0;vertical-align:baseline"></span></div><div class="t" style="left:963.78px;top:1721.90px;font-family:'Liberation Sans', sans-serif;font-size:28.000px;font-weight:400;font-style:normal;letter-spacing:0.822px;color:#1a1d26;transform:scaleX(1.0349);transform-origin:0 0;">$2,400.00<span style="display:inline-block;width:0;height:0;vertical-align:baseline"></span></div><div class="t" style="left:1287.43px;top:1721.90px;font-family:'Liberation Sans', sans-serif;font-size:28.000px;font-weight:700;font-style:normal;letter-spacing:1.872px;color:#14213d;-webkit-text-stroke:0.47px #14213d;transform:scaleX(1.0647);transform-origin:0 0;">30.00%<span style="display:inline-block;width:0;height:0;vertical-align:baseline"></span></div><div class="t" style="left:1424.51px;top:1721.90px;font-family:'Liberation Sans', sans-serif;font-size:28.000px;font-weight:700;font-style:normal;letter-spacing:1.361px;color:#14213d;-webkit-text-stroke:0.47px #14213d;transform:scaleX(1.0619);transform-origin:0 0;">Getting Started<span style="display:inline-block;width:0;height:0;vertical-align:baseline"></span></div><div class="t" style="left:22.38px;top:1789.90px;font-family:'Liberation Sans', sans-serif;font-size:28.000px;font-weight:400;font-style:normal;letter-spacing:0.623px;color:#1a1d26;transform:scaleX(1.0271);transform-origin:0 0;">Master Bedroom Complete<span style="display:inline-block;width:0;height:0;vertical-align:baseline"></span></div><div class="t" style="left:665.78px;top:1789.90px;font-family:'Liberation Sans', sans-serif;font-size:28.000px;font-weight:400;font-style:normal;letter-spacing:0.822px;color:#1a1d26;transform:scaleX(1.0349);transform-origin:0 0;">$5,000.00<span style="display:inline-block;width:0;height:0;vertical-align:baseline"></span></div><div class="t" style="left:963.78px;top:1789.90px;font-family:'Liberation Sans', sans-serif;font-size:28.000px;font-weight:400;font-style:normal;letter-spacing:0.822px;color:#1a1d26;transform:scaleX(1.0349);transform-origin:0 0;">$2,800.00<span style="display:inline-block;width:0;height:0;vertical-align:baseline"></span></div><div class="t" style="left:1287.43px;top:1789.90px;font-family:'Liberation Sans', sans-serif;font-size:28.000px;font-weight:700;font-style:normal;letter-spacing:1.872px;color:#14213d;-webkit-text-stroke:0.47px #14213d;transform:scaleX(1.0647);transform-origin:0 0;">56.00%<span style="display:inline-block;width:0;height:0;vertical-align:baseline"></span></div><div class="t" style="left:1488.22px;top:1789.90px;font-family:'Liberation Sans', sans-serif;font-size:28.000px;font-weight:700;font-style:normal;letter-spacing:1.011px;color:#14213d;-webkit-text-stroke:0.47px #14213d;transform:scaleX(1.0433);transform-origin:0 0;">In Progress<span style="display:inline-block;width:0;height:0;vertical-align:baseline"></span></div><div class="t" style="left:22.38px;top:1856.90px;font-family:'Liberation Sans', sans-serif;font-size:28.000px;font-weight:400;font-style:normal;letter-spacing:0.590px;color:#1a1d26;transform:scaleX(1.0289);transform-origin:0 0;">Exterior / Landscaping Complete<span style="display:inline-block;width:0;height:0;vertical-align:baseline"></span></div><div class="t" style="left:648.82px;top:1856.90px;font-family:'Liberation Sans', sans-serif;font-size:28.000px;font-weight:400;font-style:normal;letter-spacing:0.822px;color:#1a1d26;transform:scaleX(1.0349);transform-origin:0 0;">$10,000.00<span style="display:inline-block;width:0;height:0;vertical-align:baseline"></span></div><div class="t" style="left:963.78px;top:1856.90px;font-family:'Liberation Sans', sans-serif;font-size:28.000px;font-weight:400;font-style:normal;letter-spacing:0.822px;color:#1a1d26;transform:scaleX(1.0349);transform-origin:0 0;">$5,500.00<span style="display:inline-block;width:0;height:0;vertical-align:baseline"></span></div><div class="t" style="left:1287.43px;top:1856.90px;font-family:'Liberation Sans', sans-serif;font-size:28.000px;font-weight:700;font-style:normal;letter-spacing:1.872px;color:#14213d;-webkit-text-stroke:0.47px #14213d;transform:scaleX(1.0647);transform-origin:0 0;">55.00%<span style="display:inline-block;width:0;height:0;vertical-align:baseline"></span></div><div class="t" style="left:1488.22px;top:1856.90px;font-family:'Liberation Sans', sans-serif;font-size:28.000px;font-weight:700;font-style:normal;letter-spacing:1.011px;color:#14213d;-webkit-text-stroke:0.47px #14213d;transform:scaleX(1.0433);transform-origin:0 0;">In Progress<span style="display:inline-block;width:0;height:0;vertical-align:baseline"></span></div><div class="t" style="left:22.38px;top:1924.90px;font-family:'Liberation Sans', sans-serif;font-size:28.000px;font-weight:400;font-style:normal;letter-spacing:0.642px;color:#1a1d26;transform:scaleX(1.0282);transform-origin:0 0;">Guest Bathroom Complete<span style="display:inline-block;width:0;height:0;vertical-align:baseline"></span></div><div class="t" style="left:665.78px;top:1924.90px;font-family:'Liberation Sans', sans-serif;font-size:28.000px;font-weight:400;font-style:normal;letter-spacing:0.822px;color:#1a1d26;transform:scaleX(1.0349);transform-origin:0 0;">$4,000.00<span style="display:inline-block;width:0;height:0;vertical-align:baseline"></span></div><div class="t" style="left:1023.16px;top:1924.90px;font-family:'Liberation Sans', sans-serif;font-size:28.000px;font-weight:400;font-style:normal;letter-spacing:0.925px;color:#1a1d26;transform:scaleX(1.0349);transform-origin:0 0;">$0.00<span style="display:inline-block;width:0;height:0;vertical-align:baseline"></span></div><div class="t" style="left:1305.99px;top:1924.90px;font-family:'Liberation Sans', sans-serif;font-size:28.000px;font-weight:700;font-style:normal;letter-spacing:1.908px;color:#14213d;-webkit-text-stroke:0.47px #14213d;transform:scaleX(1.0631);transform-origin:0 0;">0.01%<span style="display:inline-block;width:0;height:0;vertical-align:baseline"></span></div><div class="t" style="left:1424.51px;top:1924.90px;font-family:'Liberation Sans', sans-serif;font-size:28.000px;font-weight:700;font-style:normal;letter-spacing:1.361px;color:#14213d;-webkit-text-stroke:0.47px #14213d;transform:scaleX(1.0619);transform-origin:0 0;">Getting Started<span style="display:inline-block;width:0;height:0;vertical-align:baseline"></span></div><div class="t" style="left:22.38px;top:1992.80px;font-family:'Liberation Sans', sans-serif;font-size:28.000px;font-weight:400;font-style:normal;letter-spacing:0.555px;color:#1a1d26;transform:scaleX(1.0261);transform-origin:0 0;">All Contractor Payments Made<span style="display:inline-block;width:0;height:0;vertical-align:baseline"></span></div><div class="t" style="left:648.82px;top:1992.80px;font-family:'Liberation Sans', sans-serif;font-size:28.000px;font-weight:400;font-style:normal;letter-spacing:0.822px;color:#1a1d26;transform:scaleX(1.0349);transform-origin:0 0;">$60,000.00<span style="display:inline-block;width:0;height:0;vertical-align:baseline"></span></div><div class="t" style="left:946.82px;top:1992.80px;font-family:'Liberation Sans', sans-serif;font-size:28.000px;font-weight:400;font-style:normal;letter-spacing:0.822px;color:#1a1d26;transform:scaleX(1.0349);transform-origin:0 0;">$30,900.00<span style="display:inline-block;width:0;height:0;vertical-align:baseline"></span></div><div class="t" style="left:1287.43px;top:1992.80px;font-family:'Liberation Sans', sans-serif;font-size:28.000px;font-weight:700;font-style:normal;letter-spacing:1.872px;color:#14213d;-webkit-text-stroke:0.47px #14213d;transform:scaleX(1.0647);transform-origin:0 0;">51.50%<span style="display:inline-block;width:0;height:0;vertical-align:baseline"></span></div><div class="t" style="left:1488.22px;top:1992.80px;font-family:'Liberation Sans', sans-serif;font-size:28.000px;font-weight:700;font-style:normal;letter-spacing:1.011px;color:#14213d;-webkit-text-stroke:0.47px #14213d;transform:scaleX(1.0433);transform-origin:0 0;">In Progress<span style="display:inline-block;width:0;height:0;vertical-align:baseline"></span></div><div class="t" style="left:49.94px;top:2098.20px;font-family:'Liberation Sans', sans-serif;font-size:22.400px;font-weight:700;font-style:normal;letter-spacing:0.899px;color:#9b7b4e;-webkit-text-stroke:0.38px #9b7b4e;transform:scaleX(1.0527);transform-origin:0 0;">Ultimate Template by FinancialAha.com - Premium financial tools and templates<span style="display:inline-block;width:0;height:0;vertical-align:baseline"></span></div><div class="t" style="left:49.80px;top:2149.70px;font-family:'Liberation Sans', sans-serif;font-size:22.400px;font-weight:400;font-style:normal;letter-spacing:0.527px;color:#000080;text-decoration:underline;text-decoration-thickness:1.3px;text-underline-offset:1.5px;transform:scaleX(1.0326);transform-origin:0 0;">Explore more Ultimate templates at FinancialAha.com<span style="display:inline-block;width:0;height:0;vertical-align:baseline"></span></div></body></html>
